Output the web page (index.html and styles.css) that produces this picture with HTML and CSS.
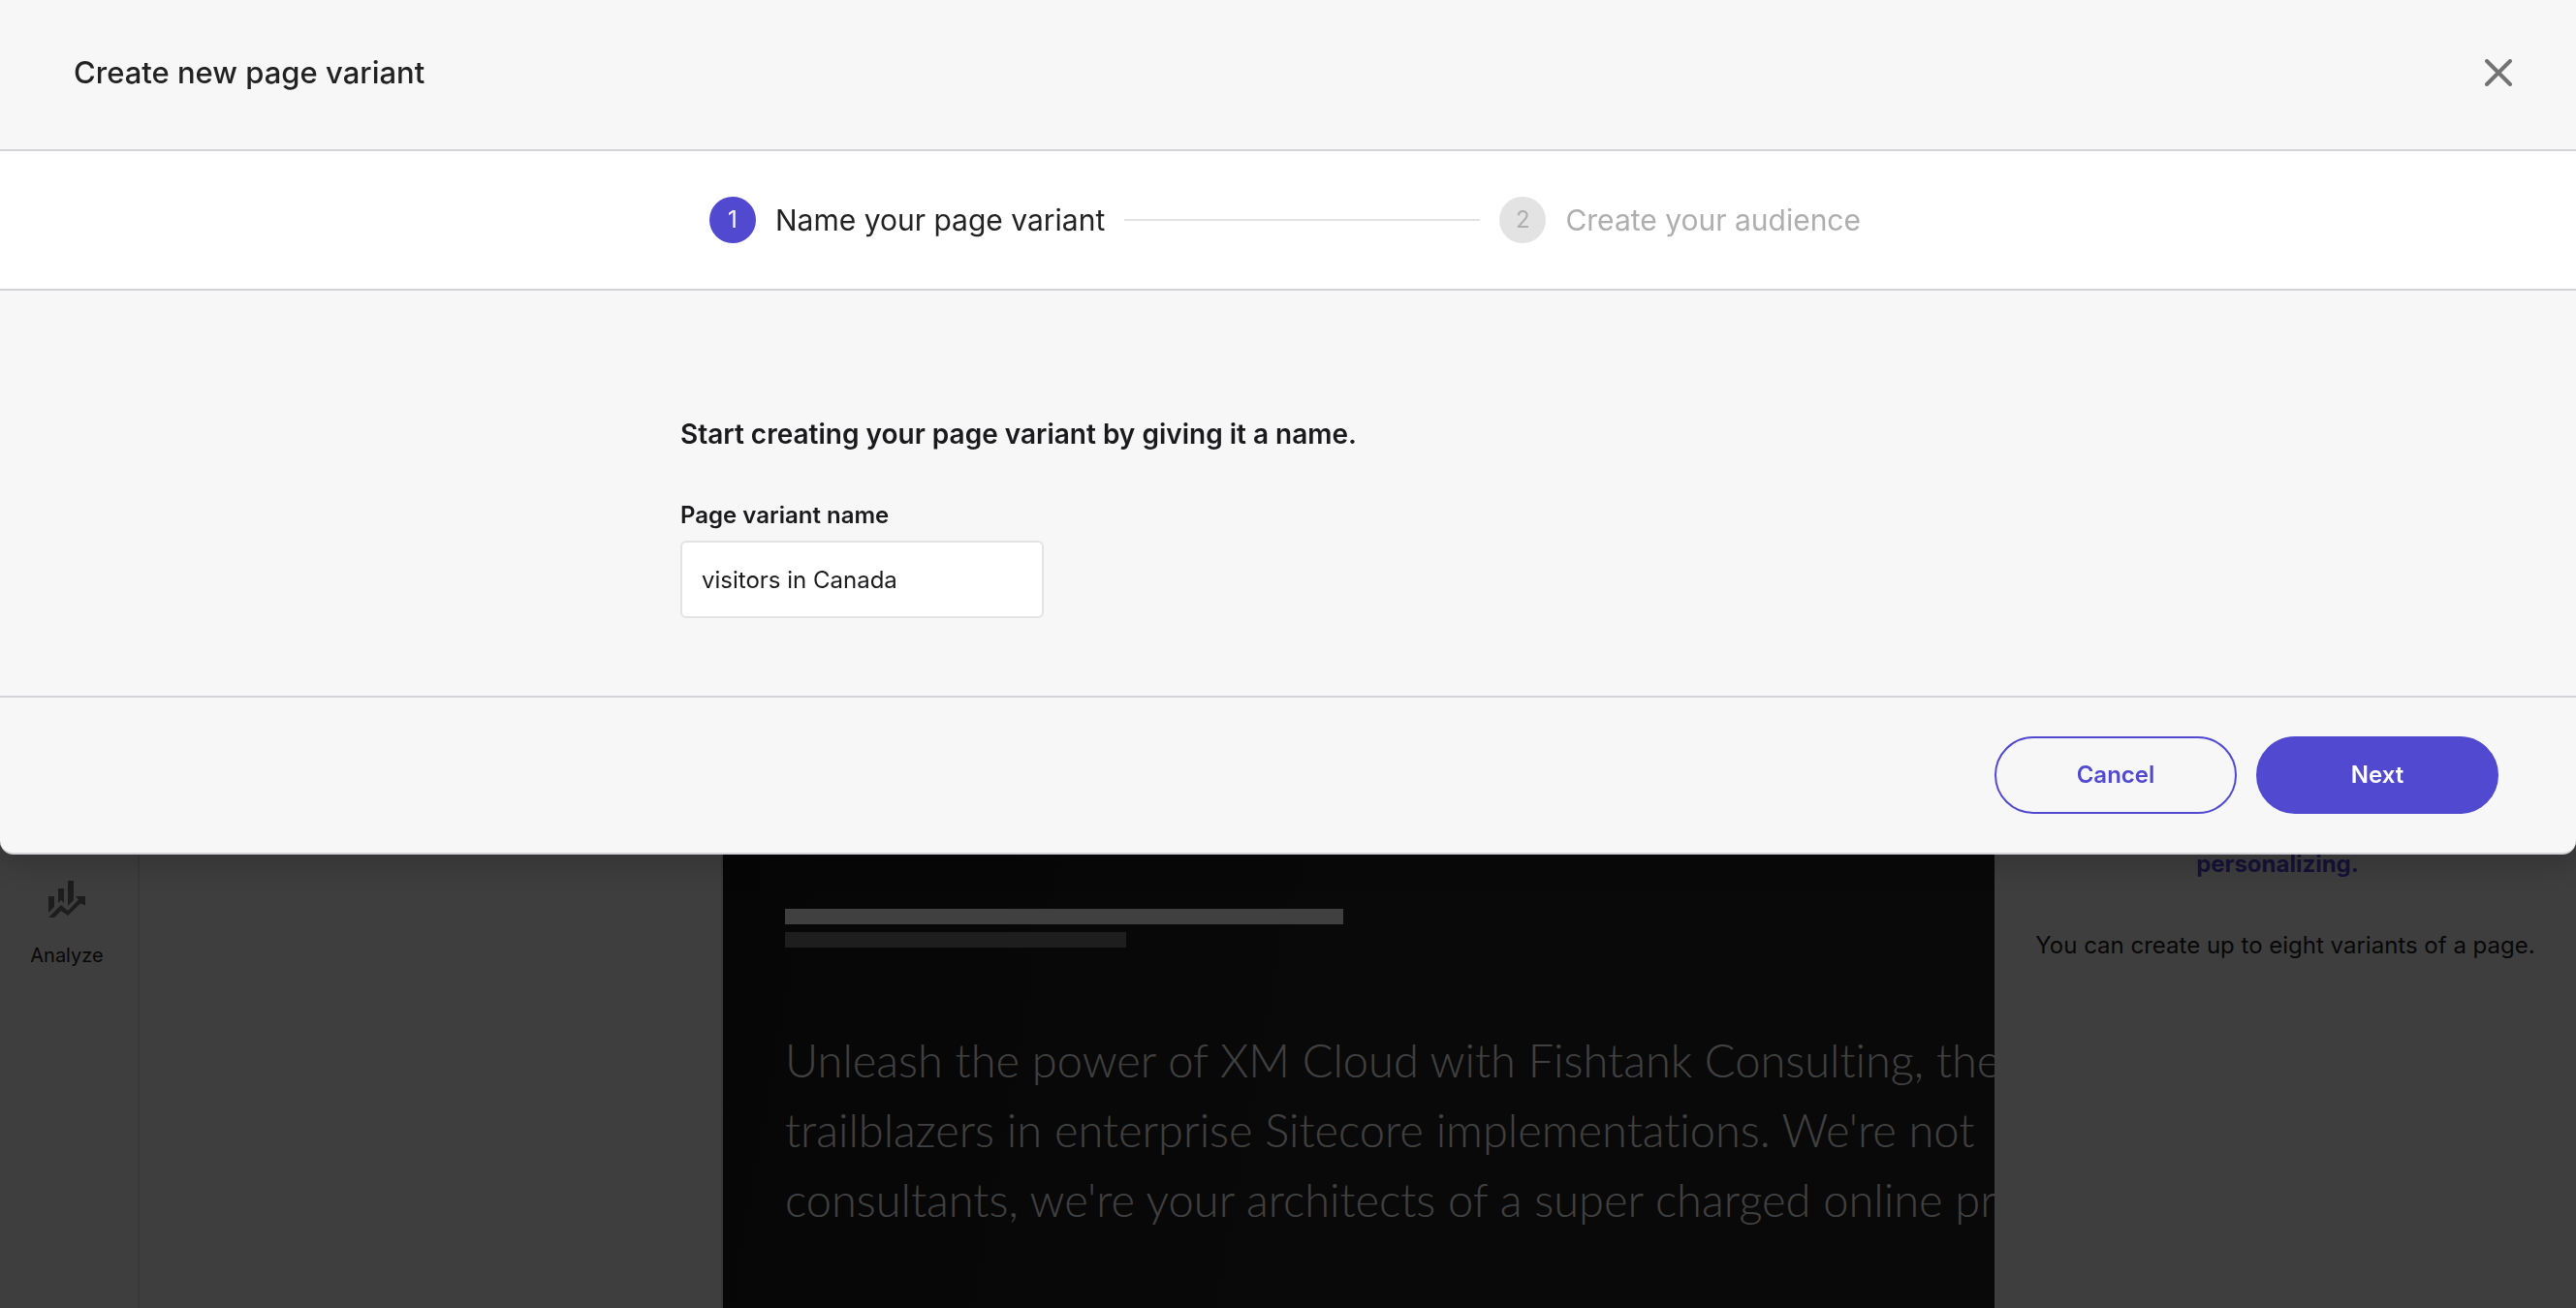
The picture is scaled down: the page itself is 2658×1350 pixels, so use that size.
FILE: index.html
```html
<!DOCTYPE html>
<html lang="en">
<head>
<meta charset="UTF-8" />
<meta name="viewport" content="width=device-width, initial-scale=1" />
<title>Create new page variant</title>
<link rel="stylesheet" href="styles.css">
</head>
<body>

<!-- Editor behind the dialog -->
<div class="editor">
  <nav class="sidebar">
    <a class="nav-item" href="#analyze">
      <svg class="nav-icon" viewBox="0 0 38 38" aria-hidden="true">
        <path d="M0 16h6v11l-6 6zM10 8h6v15l-3-3-3 3zM20 0h6v20l-6 6zM0 38l13-13 7 6 11-11.5-3-3.5h10v9.5l-5-2L20 36l-7-5L6 38z"/>
      </svg>
      <span>Analyze</span>
    </a>
  </nav>

  <main class="canvas">
    <div class="page">
      <div class="bar bar-long"></div>
      <div class="bar bar-short"></div>
      <p class="page-text">Unleash the power of XM Cloud with Fishtank Consulting, the<br>
      trailblazers in enterprise Sitecore implementations. We're not<br>
      consultants, we're your architects of a super charged online pr</p>
    </div>
  </main>

  <aside class="panel">
    <a class="panel-link" href="#personalize">personalizing.</a>
    <p>You can create up to eight variants of a page.</p>
  </aside>
</div>

<div class="overlay"></div>

<div class="dialog" role="dialog" aria-labelledby="dialogTitle">
  <header class="dialog-header">
    <h1 id="dialogTitle">Create new page variant</h1>
    <button class="close" type="button" aria-label="Close">
      <svg viewBox="0 0 28 28" aria-hidden="true"><path d="M2 2l24 24M26 2L2 26"/></svg>
    </button>
  </header>

  <div class="stepper">
    <ol class="steps">
      <li class="step active"><span class="step-number">1</span>Name your page variant</li>
      <li class="step-line" role="presentation"></li>
      <li class="step"><span class="step-number">2</span>Create your audience</li>
    </ol>
  </div>

  <form id="variantForm" class="dialog-body">
    <h2>Start creating your page variant by giving it a name.</h2>
    <label for="variantName">Page variant name</label>
    <input type="text" id="variantName" value="visitors in Canada" />
  </form>

  <footer class="dialog-footer">
    <button class="btn btn-outline" type="button">Cancel</button>
    <button class="btn btn-primary" type="submit" form="variantForm">Next</button>
  </footer>
</div>

</body>
</html>
```

FILE: styles.css
```css
* { box-sizing: border-box; }
body { margin: 0; font-family: Inter, "Liberation Sans", sans-serif; font-size: 24px; line-height: 32px; color: #222; background: #f7f7f7; }
h1, h2, p, ol { margin: 0; padding: 0; }
button, input { font: inherit; }

/* Editor */
.editor { display: flex; height: 100vh; overflow: hidden; background: #f7f7f7; }
.sidebar { flex: 0 0 144px; border-right: 2px solid #e0e0e0; padding: 909px 4px 0 0; }
.nav-item { display: flex; flex-direction: column; align-items: center; gap: 24px; color: #222; text-decoration: none; font-size: 20px; line-height: 30px; }
.nav-icon { width: 38px; height: 38px; fill: #737373; }
.canvas { flex: 1; padding-left: 600px; min-width: 0; }
.page { height: 100%; padding: 938px 0 0 64px; border-left: 2px solid #e0e0e0; background: linear-gradient(100deg, #181818, #242424 50%); overflow: hidden; }
.bar { height: 16px; margin-bottom: 8px; }
.bar-long { width: 576px; background: #fff; }
.bar-short { width: 352px; background: #777; }
.page-text { margin-top: 80px; font-family: Lato, sans-serif; font-weight: 300; font-size: 47px; line-height: 72px; font-variant-ligatures: none; color: #fff; white-space: nowrap; }
.panel { flex: 0 0 600px; padding: 876px 40px 0; text-align: center; }
.panel-link { display: block; margin-bottom: 52px; padding-right: 16px; font-weight: 700; color: #5548d9; text-decoration: none; }

.overlay { position: fixed; inset: 0; background: rgba(0, 0, 0, 0.75); }

/* Dialog */
.dialog { position: absolute; top: 0; left: 0; right: 0; background: #f7f7f7; border-bottom: 2px solid #d3d3d8; border-radius: 0 0 14px 14px; box-shadow: 0 8px 32px rgba(0, 0, 0, 0.2); overflow: hidden; }
.dialog-header { display: flex; align-items: center; justify-content: space-between; height: 156px; padding: 0 66px 4px 76px; border-bottom: 2px solid #d3d3d8; }
.dialog-header h1 { font-size: 31px; line-height: 40px; font-weight: 500; }
.close { display: flex; padding: 0; border: 0; background: none; cursor: pointer; }
.close svg { width: 28px; height: 28px; fill: none; stroke: #737373; stroke-width: 4; stroke-linecap: round; }

.stepper { padding: 47px 0; background: #fff; border-bottom: 2px solid #d3d3d8; }
.steps { display: flex; align-items: center; gap: 20px; max-width: 1254px; margin: 0 auto; padding: 0 36px 0 30px; list-style: none; }
.step { display: flex; align-items: center; gap: 20px; font-size: 30px; line-height: 48px; color: #aeaeae; }
.step-number { width: 48px; height: 48px; border-radius: 50%; background: #e3e3e3; font-size: 24px; text-align: center; }
.step.active { color: #222; }
.step.active .step-number { background: #5149d0; color: #fff; }
.step-line { flex: 1; height: 2px; background: #e3e3e3; }

.dialog-body { max-width: 1254px; margin: 0 auto; padding: 128px 0 80px; color: #1a1a1d; }
.dialog-body h2 { margin-bottom: 48px; font-size: 28px; line-height: 40px; font-weight: 600; }
.dialog-body label { display: block; margin-bottom: 10px; font-weight: 600; }
.dialog-body input { display: block; width: 375px; height: 80px; padding: 0 20px; border: 2px solid #e3e3e3; border-radius: 6px; background: #fff; color: #1a1a1d; }

.dialog-footer { display: flex; justify-content: flex-end; gap: 20px; padding: 40px 80px; border-top: 2px solid #d3d3d8; }
.btn { width: 250px; height: 80px; border: 2px solid #5149d0; border-radius: 40px; font-weight: 600; cursor: pointer; }
.btn-outline { background: none; color: #5149d0; }
.btn-primary { background: #5149d0; color: #fff; }
```
